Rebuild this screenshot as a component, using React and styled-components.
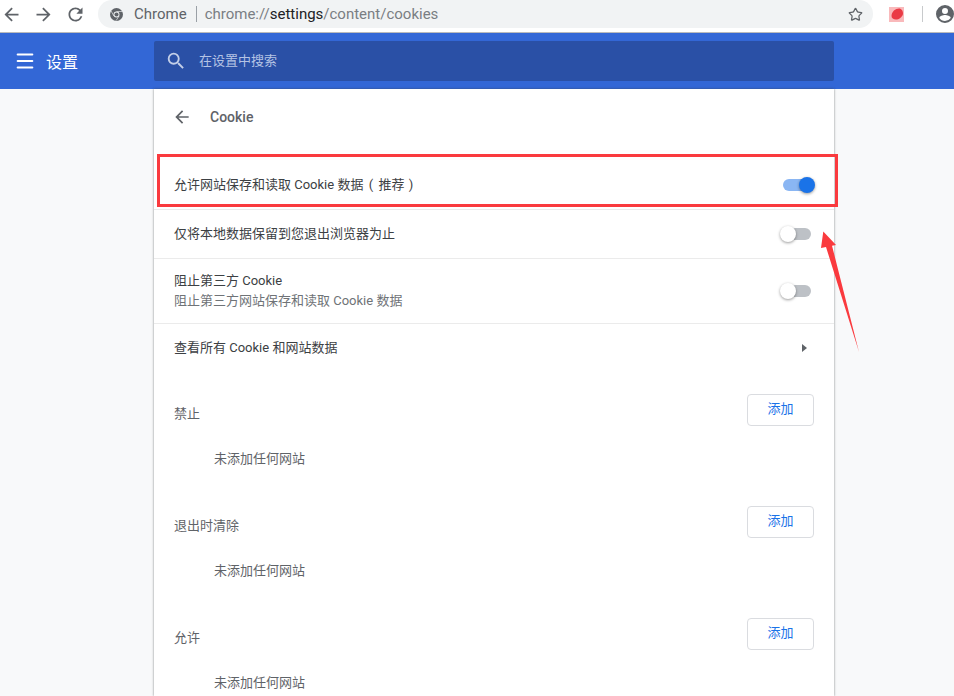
import React from "react";
import styled, { createGlobalStyle } from "styled-components";
import { Star, Menu } from "lucide-react";

const GlobalStyle = createGlobalStyle`
  html, body {
    margin: 0;
    height: 100%;
    overflow: hidden;
    background: #f8f9fa;
    font-family: Roboto, "Noto Sans CJK SC", sans-serif;
  }
`;

const sections = ["禁止", "退出时清除", "允许"];

const BACK_PATH = "M20 11H7.83l5.59-5.59L12 4l-8 8 8 8 1.41-1.41L7.83 13H20v-2z";
const FORWARD_PATH = "M4 11h12.17l-5.59-5.59L12 4l8 8-8 8-1.41-1.41L16.17 13H4v-2z";
const RELOAD_PATH =
  "M17.65 6.35A7.958 7.958 0 0 0 12 4c-4.42 0-7.99 3.58-7.99 8s3.57 8 7.99 8c3.73 0 6.84-2.55 7.73-6h-2.08A5.99 5.99 0 0 1 12 18c-3.31 0-6-2.69-6-6s2.69-6 6-6c1.66 0 3.14.69 4.22 1.78L13 11h7V4l-2.35 2.35z";
const SEARCH_PATH =
  "M15.5 14h-.79l-.28-.27A6.471 6.471 0 0 0 16 9.5 6.5 6.5 0 1 0 9.5 16c1.61 0 3.09-.59 4.23-1.57l.27.28v.79l5 4.99L20.49 19l-4.99-5zm-6 0C7.01 14 5 11.99 5 9.5S7.01 5 9.5 5 14 7.01 14 9.5 11.99 14 9.5 14z";

const MaterialIcon = ({ d, size, color }) => (
  <svg width={size} height={size} viewBox="0 0 24 24" fill={color}>
    <path d={d} />
  </svg>
);

const Toggle = ({ on }) => (
  <ToggleTrack $on={on}>
    <ToggleKnob $on={on} />
  </ToggleTrack>
);

const ChromeLogo = () => (
  <svg width="13" height="13" viewBox="0 0 24 24">
    <circle cx="12" cy="12" r="12" fill="#5f6368" />
    <circle cx="12" cy="12" r="5.5" fill="#f1f3f4" />
    <circle cx="12" cy="12" r="3.8" fill="#5f6368" />
    <path d="M12 6.5H23M7.2 14.8L2 5.5M16.8 14.8L11 23.5" stroke="#f1f3f4" strokeWidth="1.2" />
  </svg>
);

const ProfileIcon = () => (
  <svg width="18" height="18" viewBox="0 0 24 24" fill="#5f6368">
    <path d="M12 0a12 12 0 1 0 0 24 12 12 0 0 0 0-24zm0 4a4 4 0 1 1 0 8 4 4 0 0 1 0-8zm0 17.2a9.3 9.3 0 0 1-7.6-4c.1-2.5 5-3.8 7.6-3.8s7.5 1.3 7.6 3.8a9.3 9.3 0 0 1-7.6 4z" />
  </svg>
);

const RecordIcon = () => (
  <svg width="15" height="15" viewBox="0 0 15 15">
    <rect width="15" height="15" fill="#f9b9bb" />
    <path d="M2.5 9C2.5 4.5 6.5 1.5 10 1.5C12.5 1.5 14 4 14 6.5C14 9 11 12 8 12.5C5 13 2.5 11.5 2.5 9z" fill="#ea3a45" />
  </svg>
);

const App = () => {
  return (
    <Root>
      <GlobalStyle />
      <Toolbar>
        <NavIcons>
          <MaterialIcon d={BACK_PATH} size={21} color="#5f6368" />
          <MaterialIcon d={FORWARD_PATH} size={21} color="#5f6368" />
          <MaterialIcon d={RELOAD_PATH} size={21} color="#5f6368" />
        </NavIcons>
        <Omnibox>
          <ChromeLogo />
          <SiteName>Chrome</SiteName>
          <UrlDivider />
          <Url>
            chrome://<b>settings</b>/content/cookies
          </Url>
          <StarIcon size={15} strokeWidth={2} />
        </Omnibox>
        <Extensions>
          <RecordIcon />
          <ToolbarDivider />
          <ProfileIcon />
        </Extensions>
      </Toolbar>

      <Header>
        <HeaderLeft>
          <Menu size={22} strokeWidth={2.2} />
          <HeaderTitle>设置</HeaderTitle>
        </HeaderLeft>
        <SearchBox>
          <MaterialIcon d={SEARCH_PATH} size={22} color="#c3cfe8" />
          <SearchText>在设置中搜索</SearchText>
        </SearchBox>
      </Header>

      <Card>
        <BackRow>
          <MaterialIcon d={BACK_PATH} size={20} color="#5f6368" />
          <BackTitle>Cookie</BackTitle>
        </BackRow>

        <FirstRow>
          <RowLabel>
            允许网站保存和读取 Cookie 数据<OpenParen>(</OpenParen>推荐<CloseParen>)</CloseParen>
          </RowLabel>
          <Toggle on />
        </FirstRow>
        <Row>
          <RowLabel>仅将本地数据保留到您退出浏览器为止</RowLabel>
          <Toggle />
        </Row>
        <TallRow>
          <div>
            <RowLabel>阻止第三方 Cookie</RowLabel>
            <RowSub>阻止第三方网站保存和读取 Cookie 数据</RowSub>
          </div>
          <Toggle />
        </TallRow>
        <Row>
          <RowLabel>查看所有 Cookie 和网站数据</RowLabel>
          <Caret />
        </Row>

        <SectionList>
          {sections.map((name) => (
            <Section key={name}>
              <SectionHead>
                <SectionName>{name}</SectionName>
                <AddButton>添加</AddButton>
              </SectionHead>
              <EmptyText>未添加任何网站</EmptyText>
            </Section>
          ))}
        </SectionList>
      </Card>

      <Highlight />
      <ArrowMark width="42" height="124" viewBox="0 0 42 124">
        <path d="M3.3 1.5L16 15L12 15.7L39 122L6 17L1 18z" fill="#fa3a3e" />
      </ArrowMark>
    </Root>
  );
};

const Root = styled.div`
  position: relative;
  width: 954px;
  height: 696px;
  overflow: hidden;
  background: #f8f9fa;
`;

const Toolbar = styled.div`
  height: 32px;
  box-sizing: content-box;
  display: flex;
  align-items: center;
  background: #fff;
  border-bottom: 1px solid #b9babc;
`;

const NavIcons = styled.div`
  width: 98px;
  height: 28px;
  margin-bottom: 4px;
  padding-left: 1px;
  box-sizing: border-box;
  display: flex;
  align-items: center;
  gap: 11px;
`;

const Omnibox = styled.div`
  width: 775px;
  height: 28px;
  margin-bottom: 4px;
  padding: 0 10px 0 12px;
  box-sizing: border-box;
  display: flex;
  align-items: center;
  background: #f1f3f4;
  border-radius: 14px;
`;

const SiteName = styled.span`
  margin-left: 11px;
  font-size: 15px;
  color: #5f6368;
`;

const UrlDivider = styled.span`
  width: 1px;
  height: 16px;
  margin: 0 8px 0 9px;
  background: #9aa0a6;
`;

const Url = styled.span`
  flex: 1;
  font-size: 15px;
  color: #7a7e83;

  b {
    font-weight: 400;
    color: #202124;
  }
`;

const StarIcon = styled(Star)`
  color: #5f6368;
`;

const Extensions = styled.div`
  flex: 1;
  height: 28px;
  margin-bottom: 4px;
  padding-left: 16px;
  display: flex;
  align-items: center;
`;

const ToolbarDivider = styled.span`
  width: 1px;
  height: 16px;
  margin: 0 13px 0 18px;
  background: #c8cacc;
`;

const Header = styled.div`
  height: 56px;
  display: flex;
  align-items: center;
  background: #3367d6;
`;

const HeaderLeft = styled.div`
  width: 154px;
  padding-left: 14px;
  box-sizing: border-box;
  display: flex;
  align-items: center;
  gap: 10px;
  color: #fff;
`;

const HeaderTitle = styled.span`
  font-size: 16px;
  color: #fff;
`;

const SearchBox = styled.div`
  width: 680px;
  height: 40px;
  padding-left: 11px;
  box-sizing: border-box;
  display: flex;
  align-items: center;
  gap: 12px;
  background: #2a50a6;
  border-radius: 2px;
`;

const SearchText = styled.span`
  margin-bottom: 4px;
  font-size: 13px;
  color: #b4c3e4;
`;

const Card = styled.div`
  width: 680px;
  height: 607px;
  margin-left: 154px;
  background: #fff;
  box-shadow: 0 0 2px rgba(60, 64, 67, 0.45), 0 0 3px rgba(60, 64, 67, 0.2);
`;

const BackRow = styled.div`
  height: 56px;
  padding-left: 18px;
  display: flex;
  align-items: center;
  gap: 18px;
`;

const BackTitle = styled.span`
  font-size: 14px;
  font-weight: 500;
  color: #5f6368;
`;

const Row = styled.div`
  height: 48px;
  padding: 0 23px 0 20px;
  display: flex;
  align-items: center;
  justify-content: space-between;
  border-top: 1px solid #ebebeb;
`;

const FirstRow = styled(Row)`
  height: 64px;
  padding-top: 15px;
  box-sizing: border-box;
  border-top: none;
`;

const TallRow = styled(Row)`
  height: 64px;
`;

const RowLabel = styled.div`
  font-size: 13px;
  line-height: 20px;
  white-space: nowrap;
  color: #3c4043;
`;

const RowSub = styled(RowLabel)`
  color: #6f7377;
`;

const OpenParen = styled.span`
  display: inline-block;
  width: 15px;
  text-align: center;
`;

const CloseParen = styled.span`
  display: inline-block;
  width: 13px;
  text-align: center;
`;

const ToggleTrack = styled.div`
  position: relative;
  width: 28px;
  height: 12px;
  border-radius: 6px;
  background: ${(p) => (p.$on ? "#8ab6f3" : "#bdc1c6")};
`;

const ToggleKnob = styled.div`
  position: absolute;
  top: -2px;
  left: ${(p) => (p.$on ? "16px" : "-3px")};
  width: 16px;
  height: 16px;
  border-radius: 50%;
  background: ${(p) => (p.$on ? "#1a73e8" : "#fff")};
  box-shadow: 0 1px 3px rgba(0, 0, 0, 0.4);
`;

const Caret = styled.div`
  width: 0;
  height: 0;
  margin-right: 4px;
  border-top: 4px solid transparent;
  border-bottom: 4px solid transparent;
  border-left: 5px solid #5f6368;
`;

const SectionList = styled.div`
  padding: 22px 20px 0;
`;

const Section = styled.div`
  height: 112px;
`;

const SectionHead = styled.div`
  height: 32px;
  display: flex;
  align-items: center;
  justify-content: space-between;
`;

const SectionName = styled.span`
  margin-top: 4px;
  font-size: 13px;
  color: #5f6368;
`;

const AddButton = styled.button`
  width: 67px;
  height: 32px;
  padding: 0 0 5px;
  background: #fff;
  border: 1px solid #dadce0;
  border-radius: 4px;
  font-family: inherit;
  font-size: 13px;
  color: #1a73e8;
`;

const EmptyText = styled.div`
  margin-top: 23px;
  padding-left: 40px;
  font-size: 13px;
  line-height: 20px;
  color: #5f6368;
`;

const Highlight = styled.div`
  position: absolute;
  left: 157px;
  top: 154px;
  width: 675px;
  height: 47px;
  border: 3px solid #fa3a3e;
  pointer-events: none;
`;

const ArrowMark = styled.svg`
  position: absolute;
  left: 820px;
  top: 230px;
`;

export default App;
